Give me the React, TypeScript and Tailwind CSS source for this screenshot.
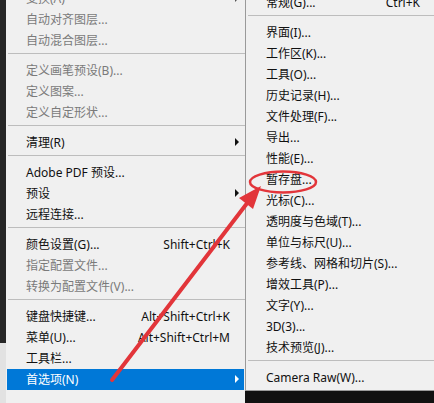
import React from 'react';

type Item = {
  label?: string;
  shortcut?: string;
  disabled?: boolean;
  arrow?: boolean;
  active?: boolean;
  sep?: boolean;
};

const leftItems: Item[] = [
  { label: '变换(A)', arrow: true, disabled: true },
  { label: '自动对齐图层...', disabled: true },
  { label: '自动混合图层...', disabled: true },
  { sep: true },
  { label: '定义画笔预设(B)...', disabled: true },
  { label: '定义图案...', disabled: true },
  { label: '定义自定形状...', disabled: true },
  { sep: true },
  { label: '清理(R)', arrow: true },
  { sep: true },
  { label: 'Adobe PDF 预设...' },
  { label: '预设', arrow: true },
  { label: '远程连接...' },
  { sep: true },
  { label: '颜色设置(G)...', shortcut: 'Shift+Ctrl+K' },
  { label: '指定配置文件...', disabled: true },
  { label: '转换为配置文件(V)...', disabled: true },
  { sep: true },
  { label: '键盘快捷键...', shortcut: 'Alt+Shift+Ctrl+K' },
  { label: '菜单(U)...', shortcut: 'Alt+Shift+Ctrl+M' },
  { label: '工具栏...' },
  { label: '首选项(N)', arrow: true, active: true },
];

const subItems: Item[] = [
  { label: '常规(G)...', shortcut: 'Ctrl+K' },
  { sep: true },
  { label: '界面(I)...' },
  { label: '工作区(K)...' },
  { label: '工具(O)...' },
  { label: '历史记录(H)...' },
  { label: '文件处理(F)...' },
  { label: '导出...' },
  { label: '性能(E)...' },
  { label: '暂存盘...' },
  { label: '光标(C)...' },
  { label: '透明度与色域(T)...' },
  { label: '单位与标尺(U)...' },
  { label: '参考线、网格和切片(S)...' },
  { label: '增效工具(P)...' },
  { label: '文字(Y)...' },
  { label: '3D(3)...' },
  { label: '技术预览(J)...' },
  { sep: true },
  { label: 'Camera Raw(W)...' },
];

const Separator: React.FC = () => (
  <div className="h-[9px] pt-[2px] pl-[2px]">
    <div className="border-t border-[#bdbdbd]" />
  </div>
);

const MenuRow: React.FC<{ item: Item }> = ({ item }) => {
  const color = item.active ? 'bg-[#0078d7] text-white' : item.disabled ? 'text-[#7a7a7a]' : 'text-[#111]';
  return (
    <div className={`relative mx-[1px] h-[21px] flex items-center pl-[19px] pr-[14px] leading-[21px] whitespace-nowrap ${color}`}>
      <span className="flex-1">{item.label}</span>
      {item.shortcut && <span>{item.shortcut}</span>}
      {item.arrow && (
        <span
          className={`absolute right-[5px] top-[6px] w-0 h-0 border-y-[4px] border-y-transparent border-l-[4px] ${
            item.active ? 'border-l-white' : item.disabled ? 'border-l-[#555]' : 'border-l-[#111]'
          }`}
        />
      )}
    </div>
  );
};

const App: React.FC = () => {
  return (
    <div className="relative w-[434px] h-[403px] overflow-hidden flex bg-[#111] text-[12px] font-['Noto_Sans','Noto_Sans_CJK_SC',sans-serif]">
      {/* dark workspace edge */}
      <div className="w-[6px] flex flex-col">
        <div className="h-[343px] bg-[#262626]" />
        <div className="flex-1 bg-[#e2e2e2]" />
      </div>

      {/* main edit menu */}
      <div className="w-[239px] bg-[#f0f0f0] overflow-hidden">
        <div className="-mt-[12px]">
          {leftItems.map((item, idx) =>
            item.sep ? <Separator key={idx} /> : <MenuRow key={idx} item={item} />
          )}
        </div>
      </div>

      {/* preferences submenu */}
      <div className="flex-1 flex flex-col">
        <div className="h-[391px] bg-[#f0f0f0] border-l border-b border-[#9a9a9a] overflow-hidden">
          <div className="-mt-[8px]">
            {subItems.map((item, idx) =>
              item.sep ? (
                <Separator key={idx} />
              ) : (
                <div key={idx} className="h-[21px] flex items-center pl-[20px] pr-[14px] leading-[21px] whitespace-nowrap text-[#111]">
                  <span className="flex-1">{item.label}</span>
                  {item.shortcut && <span>{item.shortcut}</span>}
                </div>
              )
            )}
          </div>
        </div>
        <div className="flex-1 bg-[#111]" />
      </div>

      {/* red annotation */}
      <svg className="absolute inset-0 pointer-events-none" width="434" height="403" viewBox="0 0 434 403">
        <ellipse cx="283" cy="182" rx="33" ry="10.5" fill="none" stroke="#e2353a" strokeWidth="2.5" />
        <line x1="112" y1="380" x2="248" y2="202" stroke="#e2353a" strokeWidth="4" strokeLinecap="round" />
        <polygon points="261,186 253,209 239,198" fill="#e2353a" />
      </svg>
    </div>
  );
};

export default App;
